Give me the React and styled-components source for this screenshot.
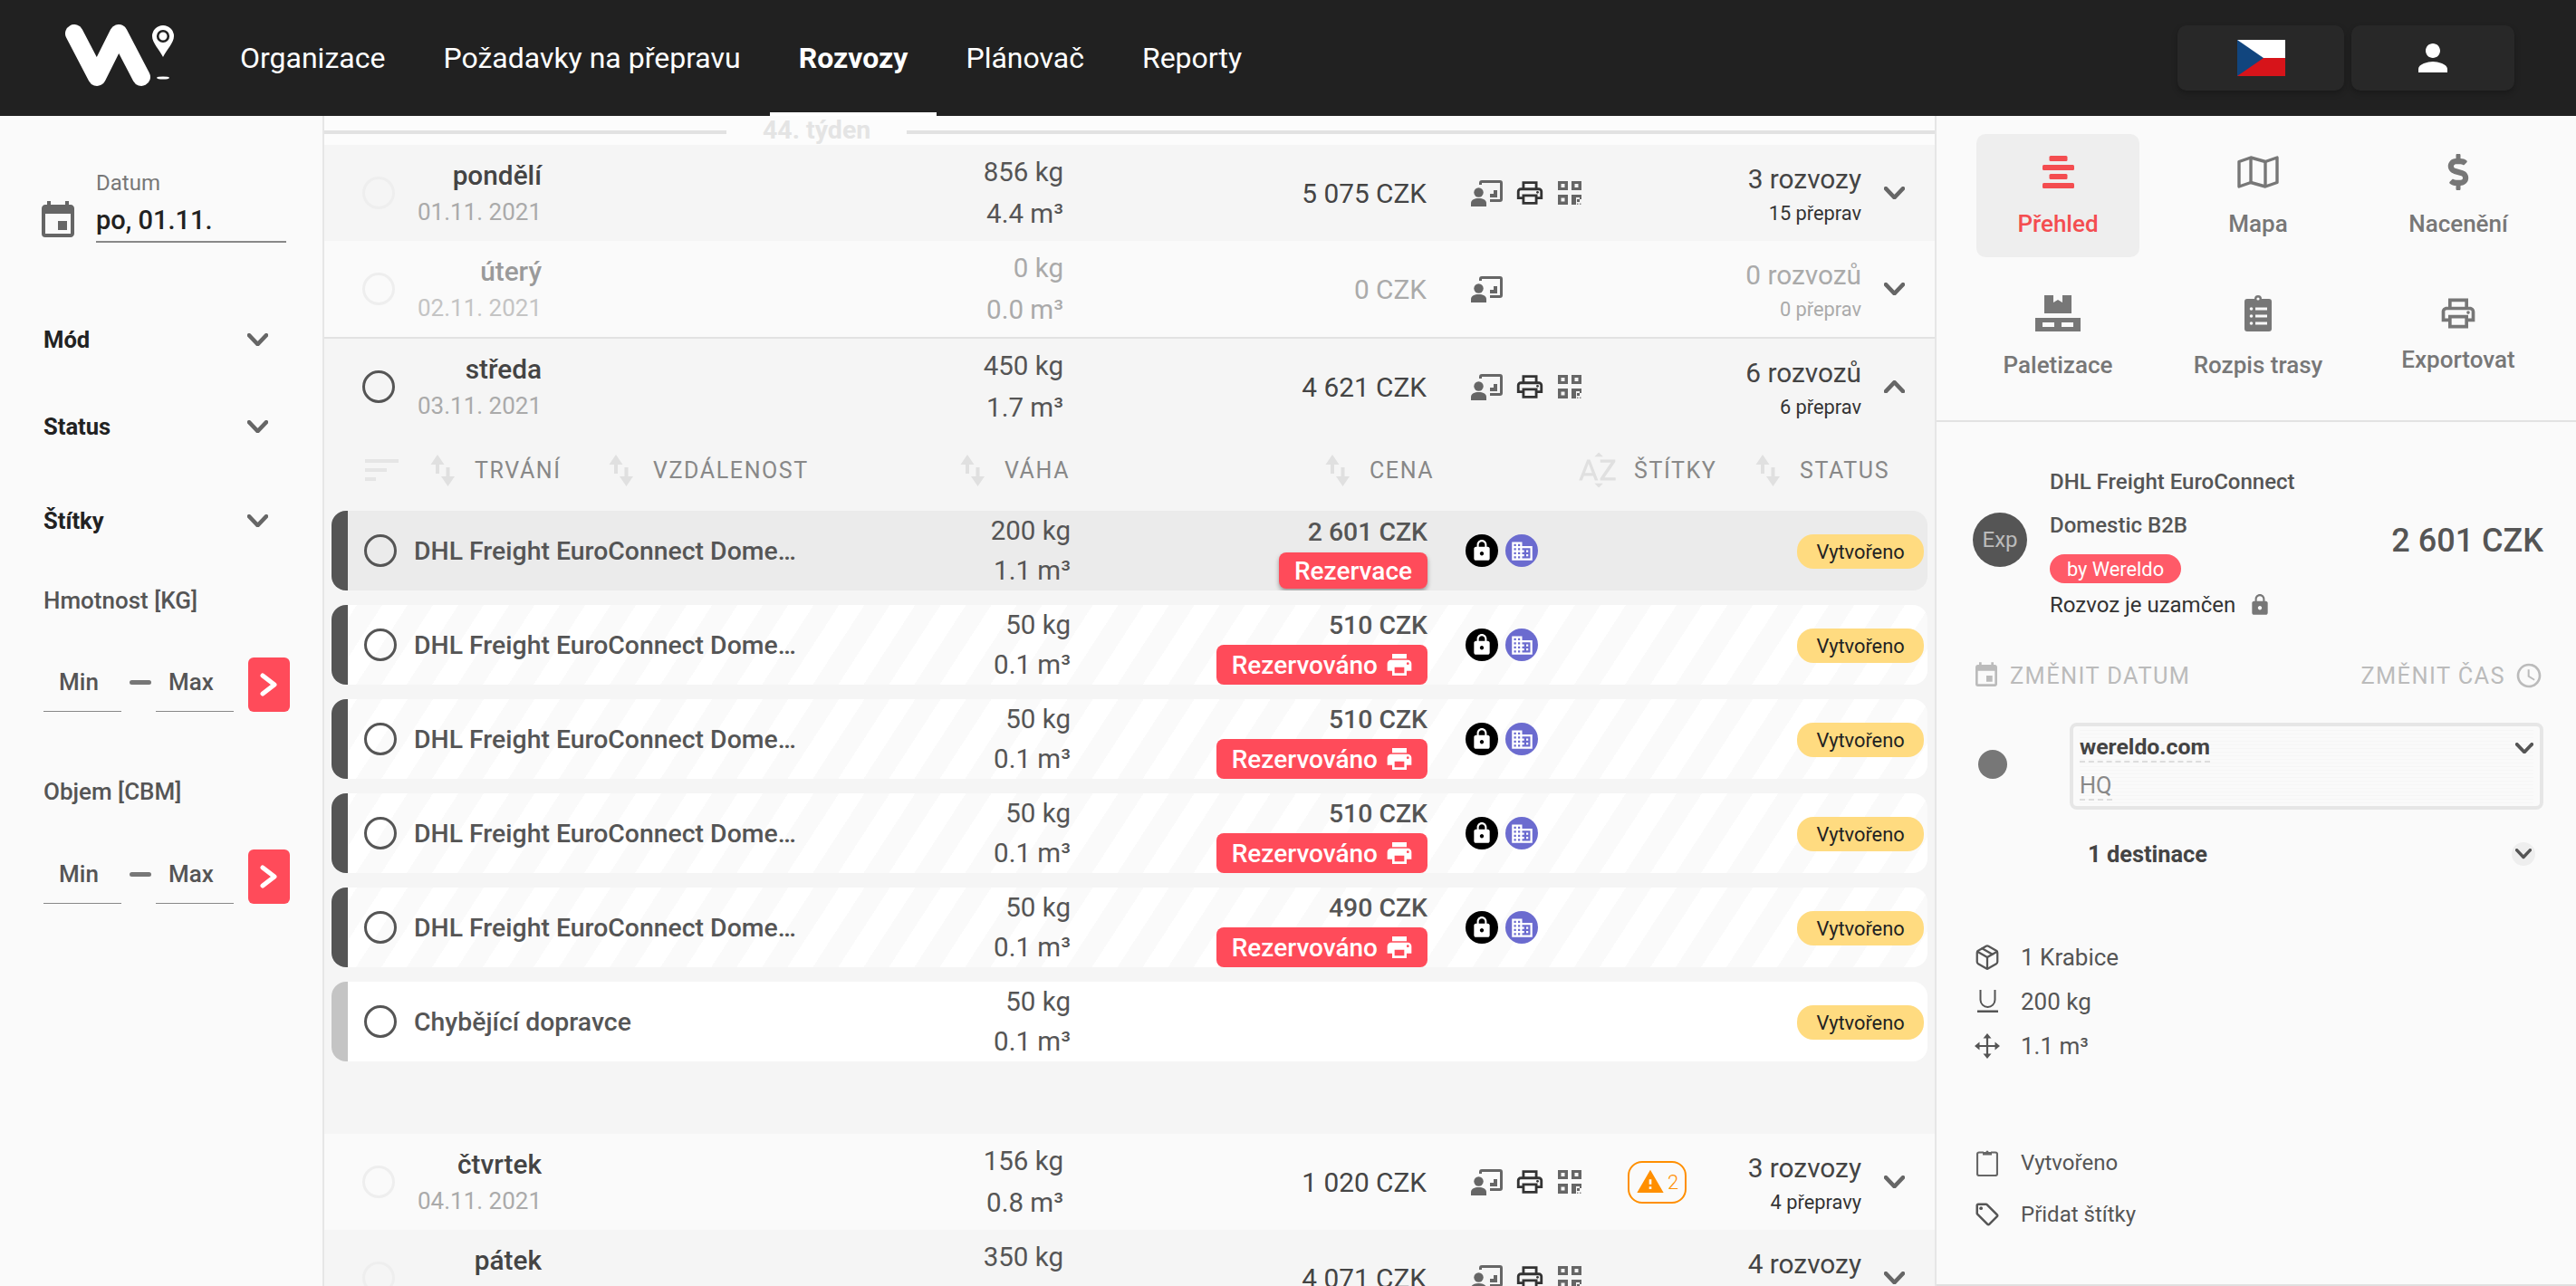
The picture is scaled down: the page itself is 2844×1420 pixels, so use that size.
import React from 'react';
import styled, { createGlobalStyle } from 'styled-components';
import { Package } from 'lucide-react';
import { FaDollarSign } from 'react-icons/fa';
import {
  MdAccessTime, MdDomain, MdEvent, MdLocalPrintshop, MdLock,
  MdOutlineLocalOffer, MdOutlineLocalPrintshop, MdPerson, MdSortByAlpha, MdWarning,
} from 'react-icons/md';

const GlobalStyle = createGlobalStyle`
  html, body { margin: 0; padding: 0; background: #fafafa; }
  body { font-family: Roboto, "Liberation Sans", sans-serif; width: 2844px; height: 1420px; overflow: hidden; }
  * { box-sizing: border-box; }
`;

const days = [
  { name: 'pondělí', date: '01.11. 2021', weight: '856 kg', volume: '4.4 m³', price: '5 075 CZK', count: '3 rozvozy', sub: '15 přeprav', tone: 'dark', icons: true },
  { name: 'úterý', date: '02.11. 2021', weight: '0 kg', volume: '0.0 m³', price: '0 CZK', count: '0 rozvozů', sub: '0 přeprav', tone: 'light', muted: true, divider: true },
  { name: 'středa', date: '03.11. 2021', weight: '450 kg', volume: '1.7 m³', price: '4 621 CZK', count: '6 rozvozů', sub: '6 přeprav', tone: 'dark', icons: true, open: true },
  { name: 'čtvrtek', date: '04.11. 2021', weight: '156 kg', volume: '0.8 m³', price: '1 020 CZK', count: '3 rozvozy', sub: '4 přepravy', tone: 'light', icons: true, warnings: 2 },
  // only the top of this row is on screen, the second lines stay empty
  { name: 'pátek', weight: '350 kg', price: '4 071 CZK', count: '4 rozvozy', tone: 'dark', icons: true },
];

const trips = [
  { name: 'DHL Freight EuroConnect Dome…', weight: '200 kg', volume: '1.1 m³', price: '2 601 CZK', action: 'Rezervace', selected: true },
  { name: 'DHL Freight EuroConnect Dome…', weight: '50 kg', volume: '0.1 m³', price: '510 CZK', action: 'Rezervováno' },
  { name: 'DHL Freight EuroConnect Dome…', weight: '50 kg', volume: '0.1 m³', price: '510 CZK', action: 'Rezervováno' },
  { name: 'DHL Freight EuroConnect Dome…', weight: '50 kg', volume: '0.1 m³', price: '510 CZK', action: 'Rezervováno' },
  { name: 'DHL Freight EuroConnect Dome…', weight: '50 kg', volume: '0.1 m³', price: '490 CZK', action: 'Rezervováno' },
  { name: 'Chybějící dopravce', weight: '50 kg', volume: '0.1 m³', missing: true },
];

const Logo = () => (
  <svg width="130" height="70" viewBox="72 27 130 70">
    <polyline points="82,37 107,85 131,37 156,85" fill="none" stroke="#fff" strokeWidth="20" strokeLinecap="round" strokeLinejoin="round" />
    <path d="M180 28a12 12 0 0 1 12 12c0 7-8 15-12 23c-4-8-12-16-12-23a12 12 0 0 1 12-12z" fill="#fff" />
    <circle cx="180" cy="40" r="5.8" fill="none" stroke="#212121" strokeWidth="2.6" />
    <ellipse cx="180" cy="86" rx="7" ry="1.6" fill="#fff" />
  </svg>
);

const Flag = () => (
  <svg width="53" height="40" viewBox="0 0 53 40">
    <rect width="53" height="20" fill="#fff" />
    <rect y="20" width="53" height="20" fill="#d7141a" />
    <polygon points="0,0 29,20 0,40" fill="#11457e" />
  </svg>
);

const Chevron = ({ up, color = '#666', width = 23 }) => (
  <svg width={width} height={width * 0.62} viewBox="0 0 23 14" style={{ flex: 'none' }}>
    <polyline points={up ? '2,12 11.5,2 21,12' : '2,2 11.5,12 21,2'} fill="none" stroke={color} strokeWidth="4.4" strokeLinecap="round" strokeLinejoin="round" />
  </svg>
);

const ArrowRight = () => (
  <svg width="20" height="26" viewBox="0 0 20 26">
    <polyline points="3,3 16,13 3,23" fill="none" stroke="#fff" strokeWidth="5" strokeLinecap="round" strokeLinejoin="round" />
  </svg>
);

const ContractIcon = () => (
  <svg width="35" height="29" viewBox="0 0 35 29" style={{ flex: 'none' }}>
    <path d="M10.5 5V3a1.5 1.5 0 0 1 1.5-1.5h20a1.5 1.5 0 0 1 1.5 1.5v18a1.5 1.5 0 0 1-1.5 1.5H21" fill="none" stroke="#666" strokeWidth="3" />
    <rect x="21" y="15" width="8" height="4" fill="#666" />
    <rect x="25" y="11" width="4" height="8" fill="#666" />
    <circle cx="8.5" cy="13.5" r="5.2" fill="#666" />
    <path d="M0 25.5c0-4 4-5.5 8.5-5.5s8.5 1.5 8.5 5.5V29H0z" fill="#666" />
  </svg>
);

const QrIcon = () => (
  <svg width="26" height="26" viewBox="0 0 26 26" style={{ flex: 'none' }}>
    <path fillRule="evenodd" fill="#666" d="M0 0h11v10H0zM3.5 3v4h4V3zM15 0h11v10H15zM18.5 3v4h4V3zM0 15h11v11H0zM3.5 18.5v4h4v-4z" />
    <path fill="#666" d="M15 15h11v5h-2v-2h-4v8h-5z" />
    <rect x="21" y="20" width="3" height="3" fill="#666" />
    <rect x="21" y="24.5" width="1.5" height="1.5" fill="#888" />
    <rect x="24" y="24.5" width="1.5" height="1.5" fill="#888" />
  </svg>
);

const SortIcon = () => (
  <svg width="27" height="35" viewBox="0 0 27 35" style={{ flex: 'none' }}>
    <path d="M8 0l7.5 11H10v10H6V11H.5z" fill="#e0e0e0" />
    <path d="M19.5 35L12 24h5.500V14h4v10H27z" fill="#e0e0e0" />
  </svg>
);

const FilterIcon = () => (
  <svg width="37" height="24" viewBox="0 0 37 24">
    <rect width="37" height="4" fill="#e5e5e5" />
    <rect y="10" width="24" height="4" fill="#e5e5e5" />
    <rect y="20" width="12" height="4" fill="#e5e5e5" />
  </svg>
);

const OverviewIcon = () => (
  <svg width="35" height="36" viewBox="0 0 35 36">
    <rect x="7.5" width="20" height="6" rx="1.5" fill="#f44d50" />
    <rect y="10" width="35" height="6" rx="1.5" fill="#f44d50" />
    <rect x="7.5" y="20" width="20" height="6" rx="1.5" fill="#f44d50" />
    <rect y="30" width="35" height="6" rx="1.5" fill="#f44d50" />
  </svg>
);

const MapIcon = () => (
  <svg width="46" height="36" viewBox="0 0 46 36">
    <path d="M2 6.5L15 2l16 4.5L44 2v27.5L31 34l-16-4.5L2 34z" fill="none" stroke="#777" strokeWidth="3.4" strokeLinejoin="round" />
    <path d="M15 2v27.5M31 6.5V34" fill="none" stroke="#777" strokeWidth="3.4" />
  </svg>
);

const PalletIcon = () => (
  <svg width="50" height="40" viewBox="0 0 50 40">
    <path d="M10 0h10v8l5-3 5 3V0h10v20H10z" fill="#777" />
    <rect y="25" width="50" height="5" fill="#777" />
    <rect y="35" width="50" height="5" fill="#777" />
    <rect y="25" width="8" height="15" fill="#777" />
    <rect x="21" y="25" width="8" height="15" fill="#777" />
    <rect x="42" y="25" width="8" height="15" fill="#777" />
  </svg>
);

const RouteSheetIcon = () => (
  <svg width="30" height="40" viewBox="0 0 30 40">
    <path d="M3 4h8a4 4 0 0 1 8 0h8a3 3 0 0 1 3 3v30a3 3 0 0 1-3 3H3a3 3 0 0 1-3-3V7a3 3 0 0 1 3-3z" fill="#777" />
    <circle cx="15" cy="4" r="1.6" fill="#fafafa" />
    <g fill="#fafafa">
      <circle cx="7.5" cy="15" r="1.8" />
      <circle cx="7.5" cy="23" r="1.8" />
      <circle cx="7.5" cy="31" r="1.8" />
      <rect x="12" y="13.5" width="13" height="3" />
      <rect x="12" y="21.5" width="13" height="3" />
      <rect x="12" y="29.5" width="13" height="3" />
    </g>
  </svg>
);

const WeightIcon = () => (
  <svg width="23" height="25" viewBox="0 0 23 25">
    <path d="M3.5 0v11a8 8 0 0 0 16 0V0" fill="none" stroke="#555" strokeWidth="2" />
    <rect y="22.5" width="23" height="2.5" fill="#555" />
  </svg>
);

const MoveIcon = () => (
  <svg width="28" height="28" viewBox="0 0 28 28">
    <path d="M14 3v22M3 14h22" fill="none" stroke="#555" strokeWidth="2.2" />
    <path d="M14 0l4.5 5.5h-9zM14 28l-4.5-5.5h9zM0 14l5.5-4.5v9zM28 14l-5.5 4.5v-9z" fill="#555" />
  </svg>
);

const ClipboardIcon = () => (
  <svg width="24" height="30" viewBox="0 0 24 30">
    <path d="M8 3.5H3a2 2 0 0 0-2 2V27a2 2 0 0 0 2 2h18a2 2 0 0 0 2-2V5.5a2 2 0 0 0-2-2h-5" fill="none" stroke="#666" strokeWidth="2.2" />
    <path d="M7 6.5V3h3.5a1.5 1.5 0 0 1 3 0H17v3.5z" fill="#666" />
  </svg>
);

const Page = styled.div`
  width: 2844px;
  height: 1420px;
  display: flex;
  flex-direction: column;
  overflow: hidden;
`;

const Header = styled.header`
  flex: none;
  height: 128px;
  background: #212121;
  display: flex;
  align-items: stretch;
  padding: 0 68px 0 0;
`;

const LogoSlot = styled.div`
  width: 233px;
  padding: 27px 0 0 72px;
  flex: none;
`;

const Nav = styled.nav`
  display: flex;
  flex: 1;
`;

const NavTab = styled.div`
  padding: 0 32px;
  display: flex;
  align-items: center;
  color: #fff;
  font-size: 32px;
  font-weight: ${(p) => (p.$active ? 700 : 400)};
  border-bottom: 4px solid ${(p) => (p.$active ? '#fff' : 'transparent')};
  border-top: 4px solid transparent;
  white-space: nowrap;
`;

const HeaderButtons = styled.div`
  display: flex;
  align-items: center;
  gap: 8px;
`;

const HeaderButton = styled.div`
  width: ${(p) => p.$width}px;
  height: 72px;
  background: #282828;
  border-radius: 10px;
  box-shadow: 0 3px 6px rgba(0, 0, 0, 0.25);
  display: flex;
  align-items: center;
  justify-content: center;
  color: #fff;
`;

const Main = styled.div`
  flex: 1;
  display: flex;
  min-height: 0;
`;

const Sidebar = styled.aside`
  flex: none;
  width: 358px;
  border-right: 2px solid #e6e6e6;
  background: #fafafa;
  padding: 59px 0 0 48px;
`;

const DateField = styled.div`
  display: flex;
  align-items: flex-end;
  gap: 18px;
  margin-left: -8px;
`;

const DateColumn = styled.div`
  width: 210px;
`;

const DateLabel = styled.div`
  font-size: 24px;
  line-height: 30px;
  color: #777;
`;

const DateValue = styled.div`
  height: 50px;
  line-height: 50px;
  font-size: 29px;
  font-weight: 500;
  color: #222;
  border-bottom: 2px solid #888;
  margin-top: 1px;
`;

const FilterRow = styled.div`
  width: 248px;
  height: 60px;
  margin-top: ${(p) => p.$top}px;
  display: flex;
  align-items: center;
  justify-content: space-between;
  font-size: 25.6px;
  font-weight: 700;
  color: #222;
`;

const RangeLabel = styled.div`
  margin-top: ${(p) => p.$top}px;
  line-height: 30px;
  font-size: 26px;
  font-weight: 500;
  color: #555;
`;

const RangeRow = styled.div`
  margin-top: ${(p) => p.$top}px;
  display: flex;
  align-items: flex-start;
`;

const RangeInput = styled.div`
  width: 86px;
  height: 60px;
  border-bottom: 1.5px solid #888;
  padding: 0 8px 6px 0;
  display: flex;
  align-items: center;
  justify-content: center;
  font-size: 26px;
  font-weight: 500;
  color: #555;
`;

const RangeDash = styled.div`
  width: 24px;
  height: 5px;
  margin: 25px 5px 0 9px;
  border-radius: 3px;
  background: #777;
`;

const RangeButton = styled.div`
  width: 46px;
  height: 60px;
  margin-left: 16px;
  border-radius: 6px;
  background: #ff4b5a;
  display: flex;
  align-items: center;
  justify-content: center;
`;

const Center = styled.main`
  flex: none;
  width: 1780px;
  border-right: 2px solid #e6e6e6;
  background: #fcfcfc;
  overflow: hidden;
`;

const Week = styled.div`
  height: 32px;
  display: flex;
  align-items: center;
  gap: 40px;
  padding-top: 4px;
`;

const WeekLine = styled.div`
  height: 4px;
  background: #e2e2e2;
  width: ${(p) => (p.$fixed ? '444px' : 'auto')};
  flex: ${(p) => (p.$fixed ? 'none' : 1)};
`;

const WeekText = styled.div`
  font-size: 28.5px;
  font-weight: 700;
  color: #e4e4e4;
  line-height: 32px;
  margin-top: -4px;
`;

const DaySection = styled.section`
  background: ${(p) => (p.$tone === 'dark' ? '#f5f5f5' : '#fafafa')};
  border-bottom: ${(p) => (p.$divider ? '2px solid #e2e2e2' : 'none')};
`;

const DayRow = styled.div`
  height: 106px;
  padding-left: 42px;
  display: grid;
  grid-template-columns: 36px 162px 576px 401px 288px 192px 1fr;
  align-items: center;
`;

const Radio = styled.div`
  width: 36px;
  height: 36px;
  border-radius: 50%;
  border: ${(p) => (p.$faint ? '3px solid #eeeeee' : '3.5px solid #555')};
  flex: none;
`;

const DayColumn = styled.div`
  text-align: right;
  padding-top: 2px;
`;

const DayName = styled.div`
  line-height: 40px;
  font-size: 29.8px;
  font-weight: 500;
  color: ${(p) => (p.$muted ? '#9a9a9a' : '#444')};
`;

const DayDate = styled.div`
  line-height: 40px;
  font-size: 26px;
  color: ${(p) => (p.$muted ? '#c4c4c4' : '#aaa')};
`;

const Amount = styled.div`
  text-align: right;
  line-height: 46px;
  font-size: 29.5px;
  color: ${(p) => (p.$muted ? '#aaa' : '#555')};
`;

const DayPrice = styled.div`
  text-align: right;
  font-size: 29.8px;
  color: ${(p) => (p.$muted ? '#aaa' : '#444')};
`;

const DayIcons = styled.div`
  display: flex;
  align-items: center;
  padding-left: 49px;
  height: 47px;
`;

const PrintSlot = styled.div`
  display: flex;
  color: #333;
  margin-left: 13px;
`;

const QrSlot = styled.div`
  display: flex;
  margin-left: 14px;
`;

const WarningBadge = styled.div`
  width: 65px;
  height: 47px;
  margin-left: 51px;
  flex: none;
  border: 2.5px solid #ff8f00;
  border-radius: 16px;
  display: flex;
  align-items: center;
  justify-content: center;
  gap: 3px;
  color: #ff8f00;
  font-size: 22px;
  font-weight: 300;
`;

const CountColumn = styled.div`
  text-align: right;
  padding-top: 8px;
`;

const CountMain = styled.div`
  line-height: 38px;
  font-size: 29.8px;
  color: ${(p) => (p.$muted ? '#aaa' : '#444')};
`;

const CountSub = styled.div`
  line-height: 38px;
  font-size: 21.8px;
  color: ${(p) => (p.$muted ? '#aaa' : '#333')};
`;

const ChevronSlot = styled.div`
  padding-left: 25px;
  display: flex;
  align-items: center;
`;

const TableHead = styled.div`
  height: 84px;
  padding: 0 0 6px 45px;
  display: grid;
  grid-template-columns: 72px 197px 388px 403px 281px 194px 1fr;
  align-items: center;
`;

const HeadCell = styled.div`
  display: flex;
  align-items: center;
  gap: 22px;
`;

const AlphaSlot = styled.div`
  display: flex;
  color: #e0e0e0;
  margin: 0 -6px 0 -4px;
`;

const HeadLabel = styled.span`
  font-size: 25px;
  font-weight: 400;
  letter-spacing: 1.6px;
  color: #888;
  text-transform: uppercase;
`;

const Cards = styled.div`
  padding: 0 8px 80px;
  display: flex;
  flex-direction: column;
  gap: 16px;
`;

const Card = styled.div`
  height: 88px;
  width: 1762px;
  border-radius: 16px;
  overflow: hidden;
  display: grid;
  grid-template-columns: 18px 54px 462px 282px 394px 408px 1fr;
  align-items: center;
  background: ${(p) => (p.$variant === 'selected' ? '#ebebeb' : p.$variant === 'plain' ? '#fff' : 'repeating-linear-gradient(123deg, #ffffff 0 23.5px, #fafafa 23.5px 47px)')};
`;

const CardBar = styled.div`
  height: 88px;
  background: ${(p) => (p.$missing ? '#c4c4c4' : '#555')};
`;

const CardRadio = styled(Radio)`
  justify-self: end;
`;

const CardName = styled.div`
  padding-left: 19px;
  font-size: 28.4px;
  font-weight: 500;
  color: #555;
  white-space: nowrap;
`;

const CardAmounts = styled.div`
  text-align: right;
  line-height: 44px;
  font-size: 29.5px;
  color: #555;
`;

const CardPrice = styled.div`
  height: 88px;
  display: flex;
  flex-direction: column;
  align-items: flex-end;
`;

const PriceText = styled.div`
  line-height: ${(p) => (p.$tall ? 48 : 45)}px;
  margin-bottom: ${(p) => (p.$tall ? -2 : -1)}px;
  font-size: 28.4px;
  font-weight: 500;
  color: #555;
`;

const ActionButton = styled.div`
  height: ${(p) => (p.$shadow ? 40 : 44)}px;
  padding: ${(p) => (p.$shadow ? '0 17px' : '0 15px 0 17px')};
  display: flex;
  align-items: center;
  gap: 8px;
  border-radius: 8px;
  background: #ff4b5a;
  color: #fff;
  font-size: 28px;
  font-weight: 500;
  box-shadow: ${(p) => (p.$shadow ? '0 3px 5px rgba(0, 0, 0, 0.35)' : 'none')};
`;

const CardBadges = styled.div`
  display: flex;
  gap: 8px;
  padding-left: 42px;
`;

const RoundBadge = styled.div`
  width: 36px;
  height: 36px;
  border-radius: 50%;
  display: flex;
  align-items: center;
  justify-content: center;
  color: #fff;
  background: ${(p) => p.$color};
`;

const StatusPill = styled.div`
  width: 140px;
  height: 38px;
  margin-top: 2px;
  border-radius: 18px;
  background: #ffdb80;
  color: #222;
  font-size: 21.8px;
  display: flex;
  align-items: center;
  justify-content: center;
`;

const Panel = styled.aside`
  flex: 1;
  min-width: 0;
  background: #fafafa;
  border-bottom: 2px solid #e0e0e0;
`;

const ViewTabs = styled.div`
  padding: 20px 19px 24px 24px;
  display: grid;
  grid-template-columns: repeat(3, 221px);
  row-gap: 20px;
  border-bottom: 2px solid #e2e2e2;
`;

const ViewTab = styled.div`
  width: 180px;
  height: 136px;
  margin-left: 20px;
  border-radius: 10px;
  background: ${(p) => (p.$active ? '#eeeeee' : 'transparent')};
  color: ${(p) => (p.$active ? '#f44d50' : '#777')};
  display: flex;
  flex-direction: column;
  align-items: center;
  padding-top: 20px;
`;

const ViewIcon = styled.div`
  height: 44px;
  display: flex;
  align-items: center;
  justify-content: center;
`;

const ViewLabel = styled.div`
  margin-top: ${(p) => (p.$tight ? 10 : 16)}px;
  line-height: 38px;
  font-size: 26px;
  font-weight: 500;
  white-space: nowrap;
`;

const Summary = styled.div`
  padding: 42px 36px 0 40px;
  display: flex;
  align-items: center;
`;

const Avatar = styled.div`
  width: 60px;
  height: 60px;
  margin-top: -8px;
  border-radius: 50%;
  background: #555;
  color: #bbb;
  font-size: 24px;
  display: flex;
  align-items: center;
  justify-content: center;
  flex: none;
`;

const SummaryText = styled.div`
  margin-left: 25px;
  flex: 1;
  font-size: 24px;
  color: #555;
`;

const SummaryLine = styled.div`
  line-height: 48px;
  font-weight: ${(p) => (p.$plain ? 400 : 500)};
  color: ${(p) => (p.$plain ? '#333' : '#555')};
  display: flex;
  align-items: center;
  gap: 14px;
`;

const OwnerPill = styled.div`
  width: 145px;
  height: 32px;
  margin-top: 8px;
  border-radius: 16px;
  background: #ff5a68;
  color: #fff;
  font-size: 21.8px;
  display: flex;
  align-items: center;
  justify-content: center;
`;

const SummaryPrice = styled.div`
  margin-top: -6px;
  font-size: 36px;
  font-weight: 500;
  color: #555;
  white-space: nowrap;
`;

const ChangeRow = styled.div`
  height: 40px;
  margin-top: 34px;
  padding: 0 36px 0 39px;
  display: flex;
  align-items: center;
  justify-content: space-between;
  color: #bbb;
`;

const ChangeItem = styled.div`
  display: flex;
  align-items: center;
  gap: 10px;
  font-size: 25.4px;
  letter-spacing: 1.4px;
  text-transform: uppercase;
`;

const StopRow = styled.div`
  margin-top: 32px;
  padding: 0 36px 0 46px;
  display: flex;
  align-items: center;
`;

const StopDot = styled.div`
  width: 32px;
  height: 32px;
  margin-top: -4px;
  border-radius: 50%;
  background: #777;
  flex: none;
`;

const StopBox = styled.div`
  margin-left: 69px;
  flex: 1;
  height: 96px;
  border: 4px solid #e6e6e6;
  border-radius: 8px;
  padding: 3px 7px;
`;

const StopInner = styled.div`
  height: 100%;
  background: repeating-linear-gradient(0deg, #f6f6f6 0 1px, transparent 1px 4px);
`;

const StopLine = styled.div`
  height: 42px;
  display: flex;
  align-items: center;
  justify-content: space-between;
`;

const StopName = styled.span`
  font-size: 24.8px;
  font-weight: 700;
  color: #444;
  border-bottom: 2px dashed #ddd;
  line-height: 30px;
`;

const StopNote = styled.span`
  font-size: 25.4px;
  color: #888;
  border-bottom: 2px dashed #ddd;
  line-height: 30px;
`;

const DestRow = styled.div`
  height: 40px;
  margin-top: 29px;
  padding: 0 45px 0 167px;
  display: flex;
  align-items: center;
  justify-content: space-between;
  font-size: 25.4px;
  font-weight: 700;
  color: #444;
`;

const ChevronCircle = styled.div`
  width: 26px;
  height: 26px;
  border-radius: 50%;
  background: #eeeeee;
  display: flex;
  align-items: center;
  justify-content: center;
`;

const Stats = styled.div`
  margin-top: ${(p) => p.$top}px;
  padding-left: 41px;
`;

const StatRow = styled.div`
  height: ${(p) => p.$height}px;
  display: grid;
  grid-template-columns: 30px 1fr;
  column-gap: 22px;
  align-items: center;
  font-size: ${(p) => p.$size}px;
  color: #555;
`;

const StatIcon = styled.div`
  display: flex;
  justify-content: center;
  color: #555;
`;

const DaySummary = ({ day }) => (
  <DayRow>
    <Radio $faint={!day.open} />
    <DayColumn>
      <DayName $muted={day.muted}>{day.name}</DayName>
      <DayDate $muted={day.muted}>{day.date || '\u00a0'}</DayDate>
    </DayColumn>
    <div>
      <Amount $muted={day.muted}>{day.weight}</Amount>
      <Amount $muted={day.muted}>{day.volume || '\u00a0'}</Amount>
    </div>
    <DayPrice $muted={day.muted}>{day.price}</DayPrice>
    <DayIcons>
      <ContractIcon />
      {day.icons && (
        <>
          <PrintSlot><MdOutlineLocalPrintshop size={34} /></PrintSlot>
          <QrSlot><QrIcon /></QrSlot>
        </>
      )}
      {day.warnings && (
        <WarningBadge>
          <MdWarning size={32} />
          {day.warnings}
        </WarningBadge>
      )}
    </DayIcons>
    <CountColumn>
      <CountMain $muted={day.muted}>{day.count}</CountMain>
      <CountSub $muted={day.muted}>{day.sub || '\u00a0'}</CountSub>
    </CountColumn>
    <ChevronSlot><Chevron up={day.open} /></ChevronSlot>
  </DayRow>
);

const TripCard = ({ trip }) => {
  const variant = trip.selected ? 'selected' : trip.missing ? 'plain' : 'striped';
  return (
    <Card $variant={variant}>
      <CardBar $missing={trip.missing} />
      <CardRadio />
      <CardName>{trip.name}</CardName>
      <CardAmounts>
        <div>{trip.weight}</div>
        <div>{trip.volume}</div>
      </CardAmounts>
      <CardPrice>
        {trip.price && <PriceText $tall={trip.selected}>{trip.price}</PriceText>}
        {trip.action && (
          <ActionButton $shadow={trip.selected}>
            {trip.action}
            {!trip.selected && <MdLocalPrintshop size={32} />}
          </ActionButton>
        )}
      </CardPrice>
      <CardBadges>
        {!trip.missing && (
          <>
            <RoundBadge $color="#000"><MdLock size={26} /></RoundBadge>
            <RoundBadge $color="#6b6bcf"><MdDomain size={27} /></RoundBadge>
          </>
        )}
      </CardBadges>
      <StatusPill>Vytvořeno</StatusPill>
    </Card>
  );
};

const App = () => (
  <Page>
    <GlobalStyle />
    <Header>
      <LogoSlot><Logo /></LogoSlot>
      <Nav>
        <NavTab>Organizace</NavTab>
        <NavTab>Požadavky na přepravu</NavTab>
        <NavTab $active>Rozvozy</NavTab>
        <NavTab>Plánovač</NavTab>
        <NavTab>Reporty</NavTab>
      </Nav>
      <HeaderButtons>
        <HeaderButton $width={184}><Flag /></HeaderButton>
        <HeaderButton $width={180}><MdPerson size={48} /></HeaderButton>
      </HeaderButtons>
    </Header>
    <Main>
      <Sidebar>
        <DateField>
          <MdEvent size={48} color="#666" />
          <DateColumn>
            <DateLabel>Datum</DateLabel>
            <DateValue>po, 01.11.</DateValue>
          </DateColumn>
        </DateField>
        <FilterRow $top={77}>Mód<Chevron /></FilterRow>
        <FilterRow $top={36}>Status<Chevron /></FilterRow>
        <FilterRow $top={44}>Štítky<Chevron /></FilterRow>
        <RangeLabel $top={43}>Hmotnost [KG]</RangeLabel>
        <RangeRow $top={48}>
          <RangeInput>Min</RangeInput>
          <RangeDash />
          <RangeInput>Max</RangeInput>
          <RangeButton><ArrowRight /></RangeButton>
        </RangeRow>
        <RangeLabel $top={73}>Objem [CBM]</RangeLabel>
        <RangeRow $top={49}>
          <RangeInput>Min</RangeInput>
          <RangeDash />
          <RangeInput>Max</RangeInput>
          <RangeButton><ArrowRight /></RangeButton>
        </RangeRow>
      </Sidebar>
      <Center>
        <Week>
          <WeekLine $fixed />
          <WeekText>44. týden</WeekText>
          <WeekLine />
        </Week>
        {days.map((day) => (
          <DaySection key={day.name} $tone={day.tone} $divider={day.divider}>
            <DaySummary day={day} />
            {day.open && (
              <>
                <TableHead>
                  <FilterIcon />
                  <HeadCell><SortIcon /><HeadLabel>Trvání</HeadLabel></HeadCell>
                  <HeadCell><SortIcon /><HeadLabel>Vzdálenost</HeadLabel></HeadCell>
                  <HeadCell><SortIcon /><HeadLabel>Váha</HeadLabel></HeadCell>
                  <HeadCell><SortIcon /><HeadLabel>Cena</HeadLabel></HeadCell>
                  <HeadCell><AlphaSlot><MdSortByAlpha size={48} /></AlphaSlot><HeadLabel>Štítky</HeadLabel></HeadCell>
                  <HeadCell><SortIcon /><HeadLabel>Status</HeadLabel></HeadCell>
                </TableHead>
                <Cards>
                  {trips.map((trip, i) => <TripCard key={i} trip={trip} />)}
                </Cards>
              </>
            )}
          </DaySection>
        ))}
      </Center>
      <Panel>
        <ViewTabs>
          <ViewTab $active><ViewIcon><OverviewIcon /></ViewIcon><ViewLabel>Přehled</ViewLabel></ViewTab>
          <ViewTab><ViewIcon><MapIcon /></ViewIcon><ViewLabel>Mapa</ViewLabel></ViewTab>
          <ViewTab><ViewIcon><FaDollarSign size={40} /></ViewIcon><ViewLabel>Nacenění</ViewLabel></ViewTab>
          <ViewTab><ViewIcon><PalletIcon /></ViewIcon><ViewLabel>Paletizace</ViewLabel></ViewTab>
          <ViewTab><ViewIcon><RouteSheetIcon /></ViewIcon><ViewLabel>Rozpis trasy</ViewLabel></ViewTab>
          <ViewTab><ViewIcon><MdOutlineLocalPrintshop size={44} /></ViewIcon><ViewLabel $tight>Exportovat</ViewLabel></ViewTab>
        </ViewTabs>
        <Summary>
          <Avatar>Exp</Avatar>
          <SummaryText>
            <SummaryLine>DHL Freight EuroConnect</SummaryLine>
            <SummaryLine>Domestic B2B</SummaryLine>
            <OwnerPill>by Wereldo</OwnerPill>
            <SummaryLine $plain>Rozvoz je uzamčen <MdLock size={26} color="#777" /></SummaryLine>
          </SummaryText>
          <SummaryPrice>2 601 CZK</SummaryPrice>
        </Summary>
        <ChangeRow>
          <ChangeItem><MdEvent size={32} />Změnit datum</ChangeItem>
          <ChangeItem>Změnit čas<MdAccessTime size={32} /></ChangeItem>
        </ChangeRow>
        <StopRow>
          <StopDot />
          <StopBox>
            <StopInner>
              <StopLine><StopName>wereldo.com</StopName><Chevron width={20} color="#555" /></StopLine>
              <StopLine><StopNote>HQ</StopNote></StopLine>
            </StopInner>
          </StopBox>
        </StopRow>
        <DestRow>
          1 destinace
          <ChevronCircle><Chevron width={18} color="#555" /></ChevronCircle>
        </DestRow>
        <Stats $top={70}>
          <StatRow $height={48} $size={26}><StatIcon><Package size={30} strokeWidth={1.8} /></StatIcon>1 Krabice</StatRow>
          <StatRow $height={49} $size={26}><StatIcon><WeightIcon /></StatIcon>200 kg</StatRow>
          <StatRow $height={49} $size={26}><StatIcon><MoveIcon /></StatIcon>1.1 m³</StatRow>
        </Stats>
        <Stats $top={76}>
          <StatRow $height={57} $size={24}><StatIcon><ClipboardIcon /></StatIcon>Vytvořeno</StatRow>
          <StatRow $height={57} $size={24}><StatIcon><MdOutlineLocalOffer size={32} /></StatIcon>Přidat štítky</StatRow>
        </Stats>
      </Panel>
    </Main>
  </Page>
);

export default App;
